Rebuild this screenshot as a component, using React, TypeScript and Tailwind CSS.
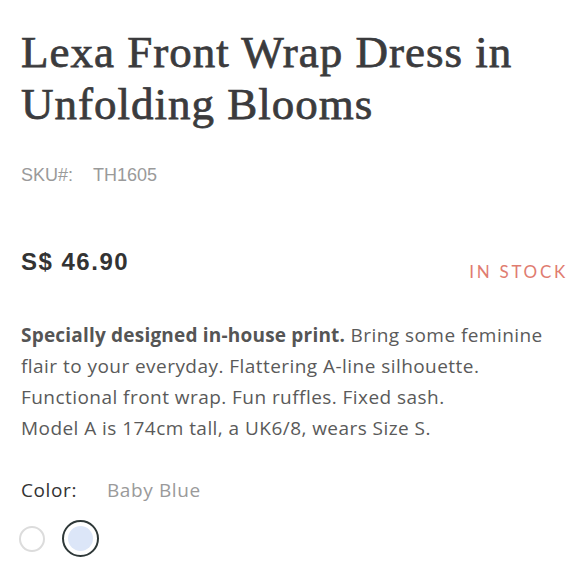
import React from "react";

export default function App() {
  return (
    <div className="w-[580px] h-[580px] bg-white overflow-hidden pl-[21px] pr-[12px]">
      <h1 className="pt-[26px] font-['Liberation_Serif',serif] text-[45px] leading-[52px] text-[#3b3b3d] tracking-[1px] [-webkit-text-stroke:0.75px]">
        Lexa Front Wrap Dress in
        <br />
        Unfolding Blooms
      </h1>
      <div className="mt-[33px] flex font-['Liberation_Sans',Arial,sans-serif] text-[18px] leading-[24px] text-[#9a9a9a]">
        <span>SKU#:</span>
        <span className="ml-[20px]">TH1605</span>
      </div>
      <div className="mt-[61px] flex justify-between items-start">
        <span className="font-['Liberation_Sans',Arial,sans-serif] text-[24px] leading-[28px] font-bold tracking-[1.5px] text-[#333333]">
          S$ 46.90
        </span>
        <span className="mt-[14px] font-['Lato',sans-serif] text-[17px] leading-[20px] tracking-[0.16em] text-[#e07c70]">
          IN STOCK
        </span>
      </div>
      <p className="mt-[38px] font-['Open_Sans',sans-serif] text-[19px] leading-[31px] tracking-[0.45px] text-[#5a5a5a]">
        <span className="font-bold tracking-[0.2px] text-[#555555]">Specially designed in-house print.</span> Bring some feminine
        <br />
        flair to your everyday. Flattering A-line silhouette.
        <br />
        Functional front wrap. Fun ruffles. Fixed sash.
        <br />
        Model A is 174cm tall, a UK6/8, wears Size S.
      </p>
      <div className="mt-[34px] flex font-['Open_Sans',sans-serif] text-[19px] leading-[24px] tracking-[0.6px]">
        <span className="text-[#333333]">Color:</span>
        <span className="ml-[30px] text-[#9a9a9a]">Baby Blue</span>
      </div>
      <div className="mt-[18px] flex items-center gap-[17px]">
        <button className="w-[26px] h-[26px] ml-[-2px] rounded-full border-2 border-[#dcdcdc] bg-white" />
        <button className="w-[37px] h-[37px] rounded-full border-2 border-[#2e3838] bg-white flex items-center justify-center">
          <span className="w-[25px] h-[25px] rounded-full bg-[#dce6f8]" />
        </button>
      </div>
    </div>
  );
}
